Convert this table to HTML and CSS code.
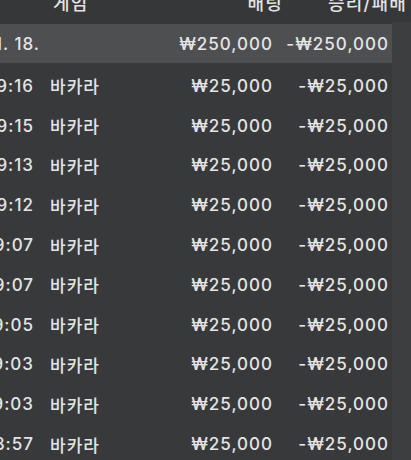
FILE: index.html
```html
<!DOCTYPE html>
<html lang="ko">
<head>
<meta charset="utf-8">
<link rel="stylesheet" href="styles.css">
</head>
<body>
<div class="sheet">
  <div class="head">
    <span class="h-game">게임</span>
    <span class="h-bet">배팅</span>
    <span class="h-res">승리/패배</span>
  </div>
  <div class="table">
    <div class="row summary">
      <div class="c-date"><span>2025. 1. 18.</span></div>
      <div class="c-game"></div>
      <div class="c-bet">₩250,000</div>
      <div class="c-res">-₩250,000</div>
    </div>
    <div class="row"><div class="c-time">19:16</div><div class="c-game">바카라</div><div class="c-bet">₩25,000</div><div class="c-res">-₩25,000</div></div>
    <div class="row"><div class="c-time">19:15</div><div class="c-game">바카라</div><div class="c-bet">₩25,000</div><div class="c-res">-₩25,000</div></div>
    <div class="row"><div class="c-time">19:13</div><div class="c-game">바카라</div><div class="c-bet">₩25,000</div><div class="c-res">-₩25,000</div></div>
    <div class="row"><div class="c-time">19:12</div><div class="c-game">바카라</div><div class="c-bet">₩25,000</div><div class="c-res">-₩25,000</div></div>
    <div class="row"><div class="c-time">19:07</div><div class="c-game">바카라</div><div class="c-bet">₩25,000</div><div class="c-res">-₩25,000</div></div>
    <div class="row"><div class="c-time">19:07</div><div class="c-game">바카라</div><div class="c-bet">₩25,000</div><div class="c-res">-₩25,000</div></div>
    <div class="row"><div class="c-time">19:05</div><div class="c-game">바카라</div><div class="c-bet">₩25,000</div><div class="c-res">-₩25,000</div></div>
    <div class="row"><div class="c-time">19:03</div><div class="c-game">바카라</div><div class="c-bet">₩25,000</div><div class="c-res">-₩25,000</div></div>
    <div class="row"><div class="c-time">19:03</div><div class="c-game">바카라</div><div class="c-bet">₩25,000</div><div class="c-res">-₩25,000</div></div>
    <div class="row"><div class="c-time">18:57</div><div class="c-game">바카라</div><div class="c-bet">₩25,000</div><div class="c-res">-₩25,000</div></div>
  </div>
</div>
</body>
</html>
```
FILE: styles.css
```css
html, body {
  margin: 0;
  padding: 0;
  height: 100%;
  overflow: hidden;
  background: #3d3e3f;
}
body {
  font-family: Inter, "Noto Sans CJK KR", sans-serif;
  font-size: 17px;
  font-weight: 500;
  letter-spacing: 1px;
  color: #e4e4e4;
}
.sheet {
  margin-left: -20px;
  margin-top: -18px;
}
.head {
  display: grid;
  grid-template-columns: 73px 120px 110px 124px;
  height: 40px;
  align-items: center;
  width: 440px;
  background: #363738;
  color: #e2e2e2;
  font-size: 18px;
  letter-spacing: 1.2px;
  margin-bottom: 2px;
}
.h-game { grid-column: 2; }
.h-bet { grid-column: 3; justify-self: end; }
.h-res { grid-column: 4; justify-self: end; }
.table {
  width: 412px;
  background: #38393a;
}
.row {
  display: grid;
  grid-template-columns: 60px 100px 132px 120px;
  height: 39.8px;
  align-items: center;
}
.summary {
  height: 39px;
  background: #4e4f50;
  margin-top: -2px;
  margin-bottom: 3px;
  border-top: 2px solid #363738;
  box-sizing: content-box;
}
.c-time {
  text-align: right;
  padding-right: 6px;
}
.c-date {
  display: flex;
  justify-content: flex-end;
  white-space: nowrap;
  padding-right: 0;
}
.c-game {
  padding-left: 10px;
}
.c-bet {
  text-align: right;
  margin-right: -1px;
}
.c-res {
  text-align: right;
  padding-right: 3px;
}
```
